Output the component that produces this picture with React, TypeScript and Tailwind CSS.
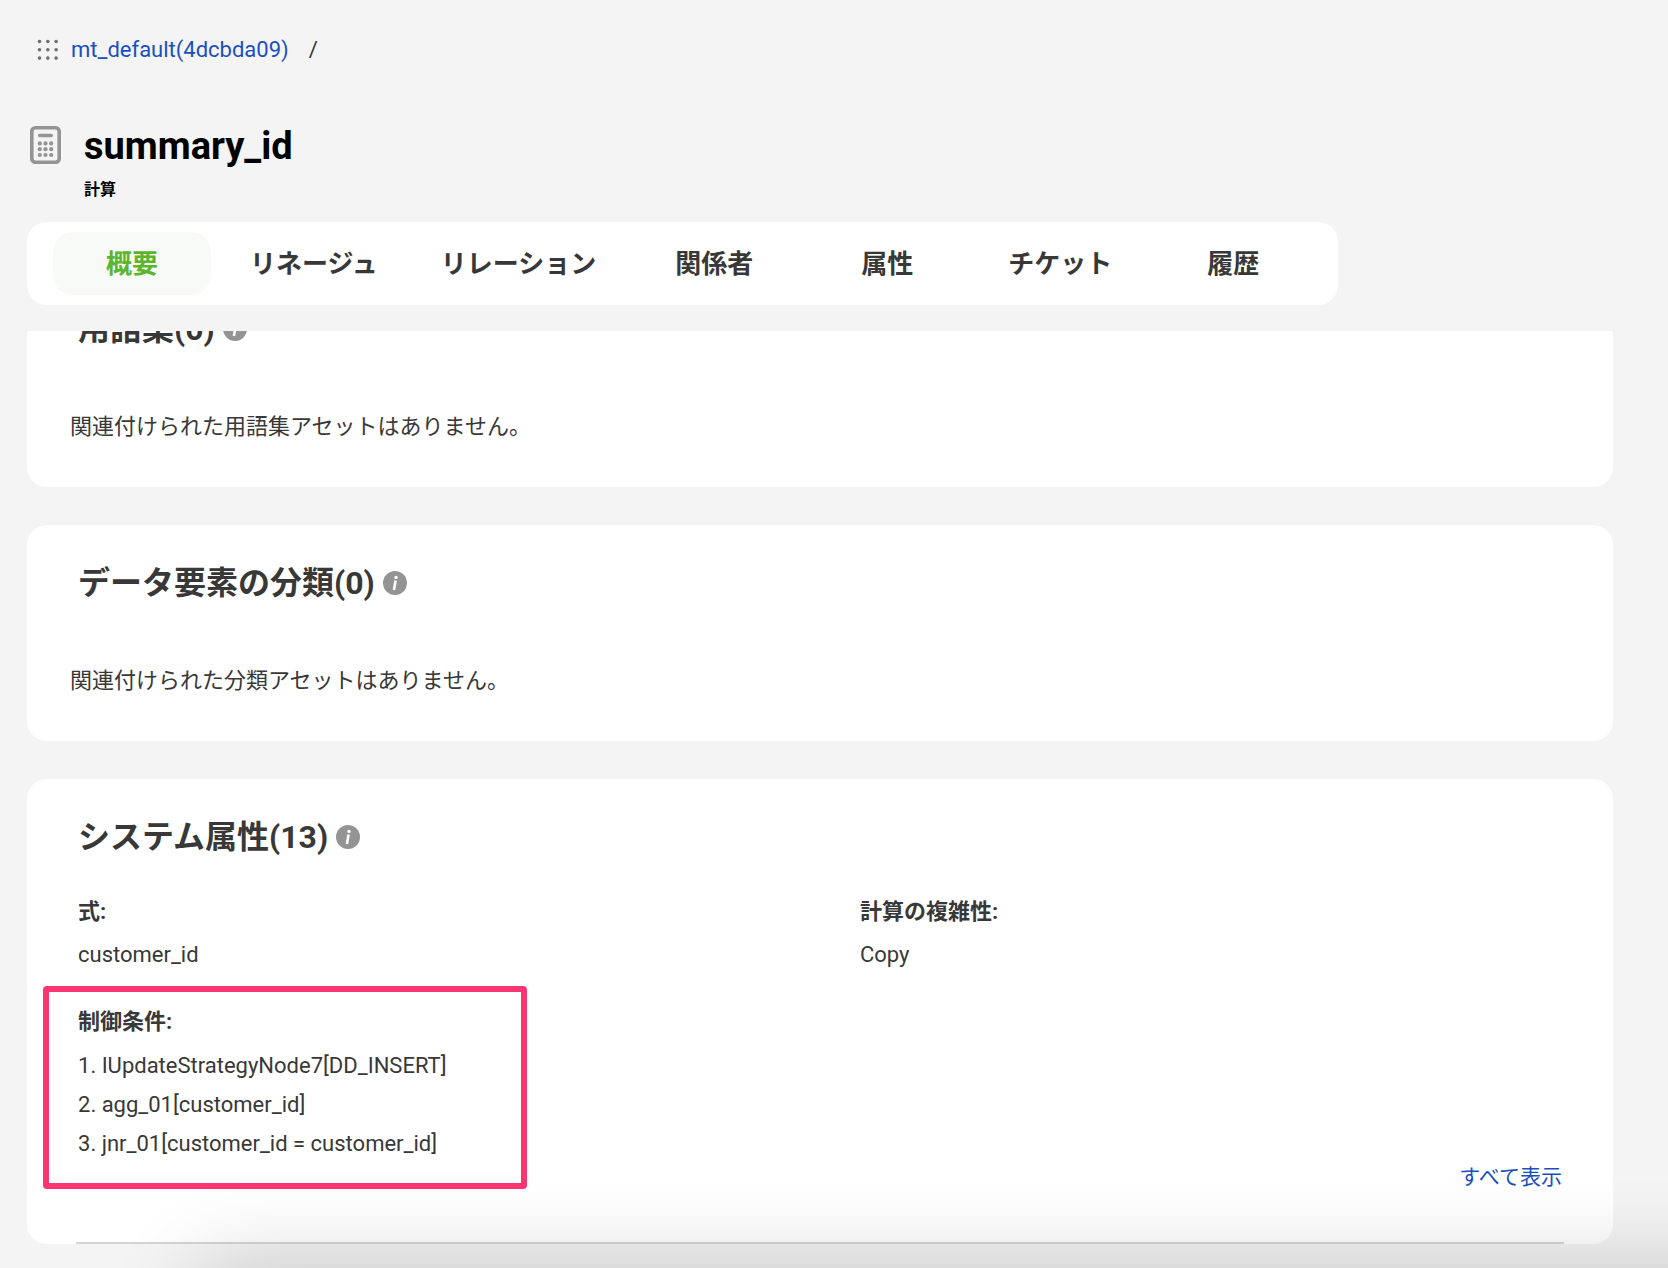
import { useState } from 'react';

const TABS = ['概要', 'リネージュ', 'リレーション', '関係者', '属性', 'チケット', '履歴'];

const CONDITIONS = [
  'IUpdateStrategyNode7[DD_INSERT]',
  'agg_01[customer_id]',
  'jnr_01[customer_id = customer_id]',
];

const GRID = [0, 1, 2];

function GridIcon() {
  return (
    <svg viewBox="0 0 22 22" fill="#6e6e6e" className="h-[22px] w-[22px] shrink-0" aria-hidden="true">
      {GRID.map((r) => GRID.map((c) => <circle key={`${r}-${c}`} cx={2.5 + c * 8.3} cy={2.5 + r * 8.3} r="1.8" />))}
    </svg>
  );
}

function CalculatorIcon() {
  return (
    <svg viewBox="0 0 32 38" fill="none" className="h-[38px] w-8 shrink-0" aria-hidden="true">
      <rect x="1.8" y="1.8" width="27.4" height="34.6" rx="3.6" stroke="#949494" strokeWidth="3.6" />
      <path d="M9.8 9.5h11.4" stroke="#949494" strokeWidth="3.6" strokeLinecap="round" />
      {GRID.map((r) => GRID.map((c) => <circle key={`${r}-${c}`} cx={9.8 + c * 5.7} cy={17.4 + r * 5.8} r="2.1" fill="#949494" />))}
    </svg>
  );
}

function InfoIcon() {
  return (
    <svg viewBox="0 0 24 24" className="h-6 w-6 shrink-0" aria-hidden="true">
      <circle cx="12" cy="12" r="12" fill="#949494" />
      <circle cx="13" cy="6.4" r="1.7" fill="#fff" />
      <path d="M12.6 9.4 10.9 19" fill="none" stroke="#fff" strokeWidth="2.6" />
    </svg>
  );
}

function CardTitle({ children }: { children: React.ReactNode }) {
  return (
    <div className="flex items-center gap-2">
      <h2 className="text-[32px] leading-10 font-bold">{children}</h2>
      <InfoIcon />
    </div>
  );
}

function EmptyCard({ title, message }: { title: string; message: string }) {
  return (
    <section className="rounded-[20px] bg-white px-[51px] pt-[38px] pb-11">
      <CardTitle>{title}</CardTitle>
      <p className="-ml-2 mt-[62px] text-[22px] leading-8">{message}</p>
    </section>
  );
}

export default function App() {
  const [tab, setTab] = useState(TABS[0]);

  return (
    <div
      lang="ja"
      className="relative min-h-screen overflow-hidden bg-[#f4f4f4] pr-[55px] pb-6 pl-[27px] font-[Roboto,'Noto_Sans_CJK_JP',sans-serif] text-[#383838]"
    >
      {/* Breadcrumb */}
      <nav className="flex items-center gap-3 pt-[34px] pl-[10px] text-[22px] leading-8">
        <GridIcon />
        <a href="#" className="text-[#1a4fc0]">mt_default(4dcbda09)</a>
        <span className="pl-2">/</span>
      </nav>

      <header className="mt-14 flex items-start gap-[22px] pl-[3px] text-black">
        <div className="pt-1">
          <CalculatorIcon />
        </div>
        <div>
          <h1 className="text-[38px] leading-[48px] font-bold">summary_id</h1>
          <p className="mt-2 text-base leading-6 font-bold">計算</p>
        </div>
      </header>

      {/* Tabs */}
      <div role="tablist" className="mt-5 flex w-fit gap-[15px] rounded-[20px] bg-white px-[26px] py-[10px]">
        {TABS.map((t) => (
          <button
            key={t}
            type="button"
            role="tab"
            aria-selected={t === tab}
            onClick={() => setTab(t)}
            className={`h-[63px] min-w-[158px] rounded-[20px] px-6 text-[26px] leading-8 font-bold ${
              t === tab ? 'bg-[#f8faf8] text-[#5bb531]' : ''
            }`}
          >
            {t}
          </button>
        ))}
      </div>

      {/* Scrolled content */}
      <main className="mt-[26px] overflow-hidden">
        <div className="-mt-[60px] flex flex-col gap-[38px]">
          <EmptyCard title="用語集(0)" message="関連付けられた用語集アセットはありません。" />
          <EmptyCard title="データ要素の分類(0)" message="関連付けられた分類アセットはありません。" />

          <section className="rounded-[20px] bg-white px-[49px] pt-[38px]">
            <div className="px-[2px]">
              <CardTitle>システム属性(13)</CardTitle>
              <dl className="mt-[39px] grid grid-cols-2 gap-x-20 text-[22px] leading-8">
                <div>
                  <dt className="font-bold">式:</dt>
                  <dd className="mt-[11px]">customer_id</dd>
                </div>
                <div>
                  <dt className="font-bold">計算の複雑性:</dt>
                  <dd className="mt-[11px]">Copy</dd>
                </div>
                <div className="relative mt-[35px] w-fit">
                  <dt className="font-bold">制御条件:</dt>
                  <dd className="mt-2">
                    <ol className="leading-[39px]">
                      {CONDITIONS.map((c, i) => (
                        <li key={c}>{i + 1}. {c}</li>
                      ))}
                    </ol>
                  </dd>
                  {/* highlight frame */}
                  <div className="pointer-events-none absolute -top-5 -right-20 -bottom-[26px] -left-[35px] rounded-[4px] border-6 border-[#f93572]" />
                </div>
              </dl>
              <div className="flex justify-end">
                <a href="#" className="text-[21px] leading-7 text-[#1a4fc0]">すべて表示</a>
              </div>
            </div>
            <hr className="mt-[51px] border-t-2 border-[#d4d4d4]" />
          </section>
        </div>
      </main>

      <div className="pointer-events-none absolute top-full -right-40 left-[200px] h-40 shadow-[0_0_90px_rgba(0,0,0,0.2)]" />
    </div>
  );
}
